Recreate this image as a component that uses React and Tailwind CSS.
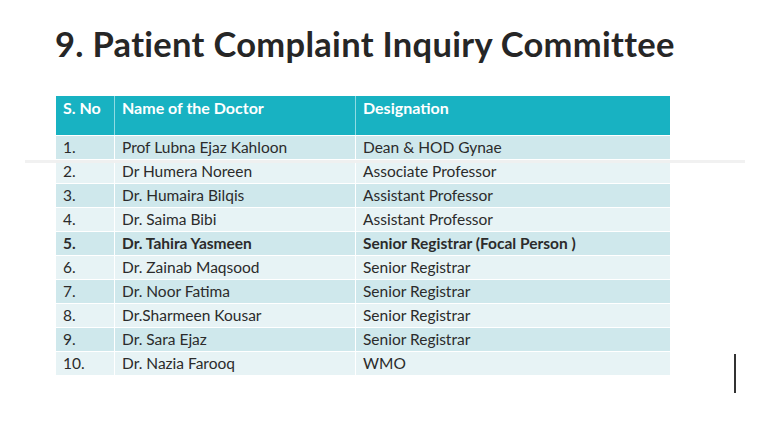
import React from 'react';

const rows = [
  ['1.', 'Prof Lubna Ejaz Kahloon', 'Dean & HOD Gynae'],
  ['2.', 'Dr Humera Noreen', 'Associate Professor'],
  ['3.', 'Dr. Humaira Bilqis', 'Assistant Professor'],
  ['4.', 'Dr. Saima Bibi', 'Assistant Professor'],
  ['5.', 'Dr. Tahira Yasmeen', 'Senior Registrar (Focal Person )', true],
  ['6.', 'Dr. Zainab Maqsood', 'Senior Registrar'],
  ['7.', 'Dr. Noor Fatima', 'Senior Registrar'],
  ['8.', 'Dr.Sharmeen Kousar', 'Senior Registrar'],
  ['9.', 'Dr. Sara Ejaz', 'Senior Registrar'],
  ['10.', 'Dr. Nazia Farooq', 'WMO'],
];

export default function App() {
  return (
    <div className="relative w-[768px] h-[432px] bg-white overflow-hidden font-['Lato','Liberation_Sans',sans-serif] text-[#2b2b2b]">
      <div className="pl-[55px] pt-[22px]">
        <h1 className="text-[34.5px] font-bold leading-[44px] tracking-[0.3px] text-[#262626]">
          9. Patient Complaint Inquiry Committee
        </h1>
      </div>

      <div className="ml-[56px] mt-[30px] w-[614px]">
        <div className="grid grid-cols-[58px_241px_315px] h-[39px] bg-[#18b2c2] text-white font-bold text-[16px] leading-[20px]">
          <div className="px-[7px] pt-[2px]">S. No</div>
          <div className="px-[7px] pt-[2px] border-l border-[#8fdbe3]">Name of the Doctor</div>
          <div className="px-[7px] pt-[2px] border-l border-[#8fdbe3]">Designation</div>
        </div>
        {rows.map(([no, name, role, bold], i) => (
          <div
            key={no}
            className={`grid grid-cols-[58px_241px_315px] h-[24px] text-[15.5px] leading-[22px] border-t border-white ${
              i % 2 === 0 ? 'bg-[#cfe8ec]' : 'bg-[#e7f3f5]'
            } ${bold ? 'font-bold' : ''}`}
          >
            <div className="px-[7px]">{no}</div>
            <div className="px-[7px] border-l border-white">{name}</div>
            <div className="px-[7px] border-l border-white">{role}</div>
          </div>
        ))}
      </div>

      <div className="absolute left-[25px] top-[160px] w-[720px] h-[3px] bg-[#f0f0f0]/90" />
      <div className="absolute left-[734px] top-[354px] w-[2px] h-[39px] bg-[#333333]" />
    </div>
  );
}
